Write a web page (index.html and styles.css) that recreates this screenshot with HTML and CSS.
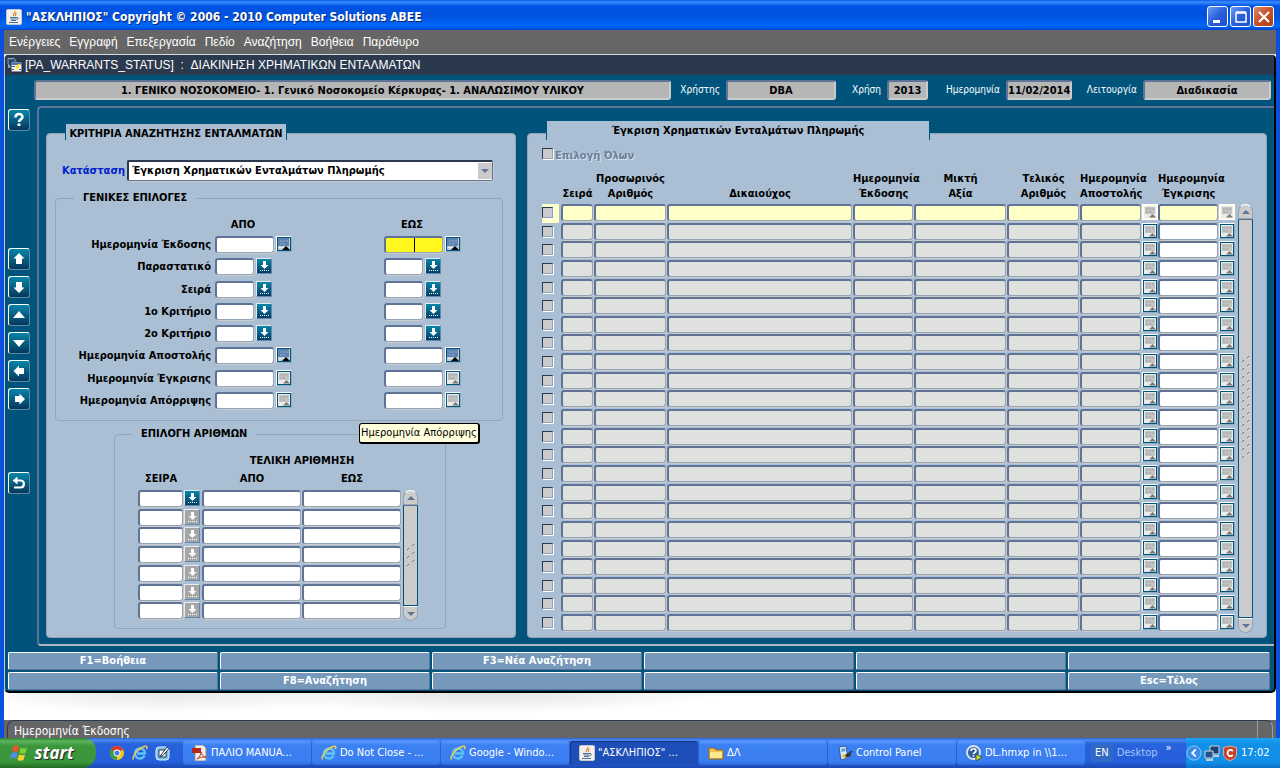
FILE: index.html
```html
<!DOCTYPE html>
<html lang="el">
<head>
<meta charset="utf-8">
<title>ΑΣΚΛΗΠΙΟΣ</title>
<link rel="stylesheet" href="styles.css">
</head>
<body>
<svg class="defs" aria-hidden="true">
  <defs>
    <pattern id="grip" width="10" height="8" patternUnits="userSpaceOnUse"><path d="M0 6h1v-1h1v-1h-1v1h-1zM5 2h1v-1h1v-1h-1v1h-1z" fill="#5e7396"/></pattern>
    <symbol id="java" viewBox="0 0 16 16">
      <rect x=".5" y=".5" width="15" height="15" rx="1.500" fill="#f2f1ec" stroke="#c8c8c8"/>
      <path d="M9 2c1 2-3 2.500-1.500 5M10.500 4C9 5 9 5.500 9.500 7" fill="none" stroke="#e0802c" stroke-width="1.200"/>
      <path d="M4 8.500h7M4.500 10h6M5 11.500h5M3 13.500h9M11 8.500c2 0 2 2-.5 2" fill="none" stroke="#4a6f9c"/>
    </symbol>
    <symbol id="cal-on" viewBox="0 0 12 12">
      <path d="M0 0h12v12H0z" fill="#c3cdd6"/><path d="M0 0h11v8H0z" fill="#5f83b0"/>
      <path d="M2 2h2v2H2zM5 2h2v2H5zM8 2h2v2H8zM2 5h2v2H2zM5 5h2v2H5z" fill="#7898c0"/>
      <path d="M1 9h5v1H1z" fill="#e8ecef"/>
      <path d="M4 12 8 8l4 4z" fill="#000"/>
    </symbol>
    <symbol id="cal-off" viewBox="0 0 12 12">
      <path d="M0 0h12v12H0z" fill="#ebebe8"/><path d="M1 1h10v7H1z" fill="#c3c3c3"/>
      <path d="M2 2h2v2H2zM5 2h2v2H5zM8 2h2v2H8zM2 5h2v2H2zM5 5h2v2H5z" fill="#b2b2b2"/>
      <path d="M5 11.500 8.500 8l3.500 3.500z" fill="#777"/>
    </symbol>
    <symbol id="lov" viewBox="0 0 14 14"><path d="M6 2h3v4h2.500L7.500 10 3.500 6H6z" fill="#fff"/><path d="M3 11.500h9" stroke="#fff" stroke-dasharray="1 1"/></symbol>
    <symbol id="ie" viewBox="0 0 16 16">
      <path d="M12.500 10.500c-1 2-2.500 3-4.500 3C5 13.500 3 11.500 3 8.500s2-5 5-5 5 2 5 5H5" fill="none" stroke="#5cc4fa" stroke-width="2.400"/>
      <path d="M1.500 14.500C-.5 12 6 3 13 1.200c2-.4 2.500 1 1.300 3" fill="none" stroke="#f8d24a" stroke-width="1.400"/>
    </symbol>
  </defs>
</svg>

<div class="window">
  <header class="titlebar">
    <svg class="app-icon"><use href="#java"/></svg>
    <h1>"ΑΣΚΛΗΠΙΟΣ" Copyright © 2006 - 2010 Computer Solutions ABEE</h1>
    <button class="win-btn" aria-label="Ελαχιστοποίηση"><svg viewBox="0 0 18 18"><path d="M4 12h7v3H4z" fill="#fff"/></svg></button>
    <button class="win-btn" aria-label="Μεγιστοποίηση"><svg viewBox="0 0 18 18"><path d="M4 5h10v9H4zM4 4h10" fill="none" stroke="#fff" stroke-width="1.500"/></svg></button>
    <button class="win-btn close" aria-label="Κλείσιμο"><svg viewBox="0 0 18 18"><path d="m4 4 10 10M14 4 4 14" stroke="#fff" stroke-width="2.200"/></svg></button>
  </header>
  <div class="client">
    <nav class="menubar">
      <button>Ενέργειες</button><button>Εγγραφή</button><button>Επεξεργασία</button><button>Πεδίο</button><button>Αναζήτηση</button><button>Βοήθεια</button><button>Παράθυρο</button>
    </nav>
    <main class="form">
      <div class="form-title">
        <svg viewBox="0 0 16 16"><path d="M1 1h5v3h4v3H4v4H1z" fill="#7fa3a0"/><path d="M1 1l3 1 3-1 2 3-4 1-1 5-3-3z" fill="#264b78" stroke="#b7d0d4" stroke-width=".6"/><path d="M4 5h11v10H4z" fill="#f4f4ee" stroke="#16213c"/><path d="M5 6h9v2H5z" fill="#4270c9"/><path d="m11 7-3 4h2l-2 3 5-4h-2l3-3z" fill="#f5dd24"/><path d="M5 9h3v1H5zM5 12h2v1H5zM12 12h2v1h-2z" fill="#3a57a6"/></svg>
        <h2>[PA_WARRANTS_STATUS] &nbsp;: &nbsp;ΔΙΑΚΙΝΗΣΗ ΧΡΗΜΑΤΙΚΩΝ ΕΝΤΑΛΜΑΤΩΝ</h2>
      </div>
      <div class="context">
        <input class="ctx org" aria-label="Οργανισμός" readonly value="1. ΓΕΝΙΚΟ ΝΟΣΟΚΟΜΕΙΟ- 1. Γενικό Νοσοκομείο Κέρκυρας- 1. ΑΝΑΛΩΣΙΜΟΥ ΥΛΙΚΟΥ">
        <label for="c-user" class="l-user">Χρήστης</label><input id="c-user" class="ctx user" readonly value="DBA">
        <label for="c-year" class="l-year">Χρήση</label><input id="c-year" class="ctx year" readonly value="2013">
        <label for="c-date" class="l-date">Ημερομηνία</label><input id="c-date" class="ctx date" readonly value="11/02/2014">
        <label for="c-mode" class="l-mode">Λειτουργία</label><input id="c-mode" class="ctx mode" readonly value="Διαδικασία">
      </div>
      <div class="body">
        <aside class="tools">
          <button aria-label="Βοήθεια"><svg viewBox="0 0 18 18"><path d="M5.500 6.500C5.500 2 12.500 2 12.500 6c0 2.500-3.500 2.300-3.500 5" fill="none" stroke="#fff" stroke-width="2.600"/><path d="M7.500 12.500h3V15h-3z" fill="#fff"/></svg></button>
          <div class="tool-group">
            <button aria-label="Πρώτη"><svg viewBox="0 0 18 18"><path d="m9 3 5.500 5.500H12V14H6V8.500H3.500z" fill="#fff"/></svg></button>
            <button aria-label="Τελευταία"><svg viewBox="0 0 18 18"><path d="m9 15 5.500-5.500H12V4H6v5.500H3.500z" fill="#fff"/></svg></button>
            <button aria-label="Επάνω"><svg viewBox="0 0 18 18"><path d="m9 5 6 7H3z" fill="#fff"/></svg></button>
            <button aria-label="Κάτω"><svg viewBox="0 0 18 18"><path d="m9 13 6-7H3z" fill="#fff"/></svg></button>
            <button aria-label="Προηγούμενο"><svg viewBox="0 0 18 18"><path d="m3.500 9 5.500-5.500V6h5v6H9v2.500z" fill="#fff"/></svg></button>
            <button aria-label="Επόμενο"><svg viewBox="0 0 18 18"><path d="M15 9 9.500 3.500V6H5v6h4.500v2.500z" fill="#fff"/></svg></button>
          </div>
          <button aria-label="Επιστροφή"><svg viewBox="0 0 18 18"><path d="M4 13.500h6.500c4.500 0 4.500-7 0-7H6" fill="none" stroke="#fff" stroke-width="2.200"/><path d="m2.500 6.500 5-4v8z" fill="#fff"/></svg></button>
        </aside>
        <div class="workspace">
          <section class="panel search">
            <h3 class="tab">ΚΡΙΤΗΡΙΑ ΑΝΑΖΗΤΗΣΗΣ ΕΝΤΑΛΜΑΤΩΝ</h3>
            <div class="status-row">
              <label for="status">Κατάσταση</label>
              <div class="select-box"><select id="status"><option>Έγκριση Χρηματικών Ενταλμάτων Πληρωμής</option></select><svg viewBox="0 0 14 16"><path d="M0 0h14v16H0z" fill="#cbcbcb"/><path d="M3 6h8l-4 4z" fill="#5e7396"/></svg></div>
            </div>
            <fieldset class="general">
              <legend>ΓΕΝΙΚΕΣ ΕΠΙΛΟΓΕΣ</legend>
              <div class="range-head"><span></span><span>ΑΠΟ</span><span>ΕΩΣ</span></div>
              <div class="ranges" id="ranges"></div>
            </fieldset>
            <fieldset class="numbers">
              <legend>ΕΠΙΛΟΓΗ ΑΡΙΘΜΩΝ</legend>
              <div class="grid-with-bar">
                <table class="num-table">
                  <colgroup><col class="n-series"><col class="n-btn"><col><col></colgroup>
                  <thead>
                    <tr><th></th><th></th><th colspan="2">ΤΕΛΙΚΗ ΑΡΙΘΜΗΣΗ</th></tr>
                    <tr><th>ΣΕΙΡΑ</th><th></th><th>ΑΠΟ</th><th>ΕΩΣ</th></tr>
                  </thead>
                  <tbody id="num-rows"></tbody>
                </table>
                <div class="scroll"><button aria-label="Κύλιση επάνω"><svg viewBox="0 0 12 12"><path d="m6 4 4 4H2z" fill="#5e7396"/></svg></button><div class="thumb"><svg class="grip short"><rect width="10" height="100%" fill="url(#grip)"/></svg></div><button aria-label="Κύλιση κάτω"><svg viewBox="0 0 12 12"><path d="m6 8 4-4H2z" fill="#5e7396"/></svg></button></div>
              </div>
            </fieldset>
            <div class="tooltip" role="tooltip">Ημερομηνία Απόρριψης</div>
          </section>
          <section class="panel results">
            <h3 class="tab">Έγκριση Χρηματικών Ενταλμάτων Πληρωμής</h3>
            <label class="select-all"><input type="checkbox" disabled>Επιλογή Όλων</label>
            <div class="grid-with-bar">
              <table class="res-table">
                <colgroup><col class="w19"><col class="w33"><col class="w73"><col><col class="w61"><col class="w93"><col class="w73"><col class="w62"><col class="w16"><col class="w61"><col class="w18"></colgroup>
                <thead><tr><th></th><th>Σειρά</th><th>Προσωρινός<br>Αριθμός</th><th>Δικαιούχος</th><th>Ημερομηνία<br>Έκδοσης</th><th>Μικτή<br>Αξία</th><th>Τελικός<br>Αριθμός</th><th>Ημερομηνία<br>Αποστολής</th><th></th><th>Ημερομηνία<br>Έγκρισης</th><th></th></tr></thead>
                <tbody id="res-rows"></tbody>
              </table>
              <div class="scroll"><button aria-label="Κύλιση επάνω"><svg viewBox="0 0 12 12"><path d="m6 4 4 4H2z" fill="#5e7396"/></svg></button><div class="thumb"><svg class="grip long"><rect width="10" height="100%" fill="url(#grip)"/></svg></div><button aria-label="Κύλιση κάτω"><svg viewBox="0 0 12 12"><path d="m6 8 4-4H2z" fill="#5e7396"/></svg></button></div>
            </div>
          </section>
        </div>
      </div>
      <div class="fkeys">
        <button>F1=Βοήθεια</button><button aria-label="F2"></button><button>F3=Νέα Αναζήτηση</button><button aria-label="F4"></button><button aria-label="F5"></button><button aria-label="F6"></button>
        <button aria-label="F7"></button><button>F8=Αναζήτηση</button><button aria-label="F9"></button><button aria-label="F10"></button><button aria-label="F11"></button><button>Esc=Τέλος</button>
      </div>
    </main>
    <div class="backdrop"></div>
    <div class="statusbar"><span>Ημερομηνία Έκδοσης</span><i></i></div>
  </div>
</div>

<footer class="taskbar">
  <button class="start"><svg viewBox="0 0 20 18"><path d="M3 3c2-2 4-2 6-.5L8 8C6 6.800 4 7 2 8z" fill="#e8562c"/><path d="M10.500 3.500c2 1.300 4 1 6.500 0l-1.500 5.500c-2 1-4 1-6 0z" fill="#7fcf3a"/><path d="M1.500 9.500c2-1.500 4-1.500 6-.3l-1.300 5.500c-2-1.300-4-1-6.200.3z" fill="#4f8df0"/><path d="M9 10.500c2 1 4 1 6 0L13.500 16c-2 1-4 1-6 0z" fill="#fad02c"/></svg>start</button>
  <div class="quick">
    <button aria-label="Chrome"><svg viewBox="0 0 16 16"><circle cx="8" cy="8" r="7" fill="#f3c622"/><path d="M8 8 1.900 4.500a7 7 0 0 1 12.200 0z" fill="#d9382a"/><path d="M8 8 1.900 4.500A7 7 0 0 0 8 15z" fill="#3b9c46"/><circle cx="8" cy="8" r="3.400" fill="#fff"/><circle cx="8" cy="8" r="2.500" fill="#3f83d8"/></svg></button>
    <button aria-label="Internet Explorer"><svg viewBox="0 0 16 16"><use href="#ie"/></svg></button>
    <button aria-label="Show Desktop"><svg viewBox="0 0 16 16"><rect x="1" y="2" width="13" height="13" rx="3" fill="#7fbdf0" stroke="#dff0ff"/><path d="M4 5h7v7H4z" fill="#fff" stroke="#245"/><path d="m6 10 6-8 2 1.500-6 7-3 1z" fill="#fff" stroke="#234"/></svg></button>
  </div>
  <div class="tasks">
    <button><svg viewBox="0 0 16 16"><path d="M3 0h8l3 3v13H3z" fill="#f3efe9" stroke="#a08b80"/><path d="M0 3h9v5H0z" fill="#b5261d"/><path d="M5 14c3-2 4-5 4-7 1 3 2 5 5 5-3 0-6 0-9 2z" fill="none" stroke="#c0392b"/></svg><span>ΠΑΛΙΟ MANUA...</span></button>
    <button><svg viewBox="0 0 16 16"><use href="#ie"/></svg><span>Do Not Close - ...</span></button>
    <button><svg viewBox="0 0 16 16"><use href="#ie"/></svg><span>Google - Windo...</span></button>
    <button class="active"><svg viewBox="0 0 16 16"><use href="#java"/></svg><span>"ΑΣΚΛΗΠΙΟΣ" ...</span></button>
    <button><svg viewBox="0 0 16 16"><path d="M1 3h5l2 2h7v9H1z" fill="#f0c24e" stroke="#9a6a14"/><path d="M2 7h12v6H2z" fill="#fde890"/></svg><span>ΔΛ</span></button>
    <button><svg viewBox="0 0 16 16"><path d="m2 2 7-1 2 12-7 2z" fill="#d7e8f8" stroke="#345a94"/><path d="m4 4 4-1 .5 3-4 1z" fill="#5f9fe0"/><path d="m8 11 5-3 2-2M8 12l6-2" stroke="#333" stroke-width="1.600" fill="none"/><path d="m5 10 3-1 1 3-3 1z" fill="#e7b93b"/></svg><span>Control Panel</span></button>
    <button><svg viewBox="0 0 16 16"><circle cx="7.500" cy="7.500" r="6.500" fill="#2f5ea8" stroke="#dbe3ea" stroke-width="2"/><path d="M5 6c0-3 5-3 5 0 0 1.500-2.500 1.500-2.500 3M7.500 10v1.500" stroke="#fff" stroke-width="1.600" fill="none"/><path d="m10 9 6 3.500-6 3.500z" fill="#c7e01c" stroke="#355"/></svg><span>DL.hmxp in \\1...</span></button>
  </div>
  <div class="lang"><b>EN</b><span>Desktop</span><i>»</i></div>
  <div class="tray">
    <button aria-label="Εμφάνιση κρυφών εικονιδίων"><svg viewBox="0 0 18 18"><circle cx="9" cy="9" r="8" fill="#3a8bea" stroke="#9fd0fa"/><path d="M11 5 7 9l4 4" fill="none" stroke="#fff" stroke-width="2"/></svg></button>
    <svg viewBox="0 0 16 16"><path d="M6 1h9v8H6z" fill="#1d3f74" stroke="#c9d2da"/><path d="M1 6h8v7H1z" fill="#24518c" stroke="#d7dde2"/><path d="M2 15h7M10 11h5" stroke="#c3cad0" stroke-width="2"/></svg>
    <svg viewBox="0 0 16 16"><path d="M1.500 2.500 8 1l6.500 1.500V9c0 4-4 6-6.500 6.500C5.500 15 1.500 13 1.500 9z" fill="#c4432a" stroke="#e6a898"/><path d="M10.800 6C8.500 3.800 5.500 5 5.500 8s3 4.200 5.300 2" fill="none" stroke="#fff" stroke-width="1.800"/></svg>
    <time>17:02</time>
  </div>
</footer>
<script src="app.js"></script>
</body>
</html>
```

FILE: styles.css
```css
:root {
  --ui: "DejaVu Sans Condensed", "Noto Sans", sans-serif;
  --teal: #00547b;
  --panel: #aabfd3;
  --edge: #5e7396;
  --soft: #93a3b8;
  --light: #cbcbcb;
}
* { box-sizing: border-box; }
body { margin: 0; min-height: 100vh; display: flex; flex-direction: column; font: 11px/14px var(--ui); color: #000; }
button, input, select { font: inherit; color: inherit; margin: 0; padding: 0; border: 0; }
button { background: none; display: flex; align-items: center; justify-content: center; }
h1, h2, h3 { margin: 0; }
svg { display: block; flex: none; }
.defs { position: absolute; width: 0; height: 0; }

.window { flex: 1; display: flex; flex-direction: column; background: #0a4fe0; }
.titlebar { height: 30px; padding: 3px 6px 0; display: flex; align-items: center; gap: 2px; background: linear-gradient(#0a5be8 0, #3a8dff 2px, #0054e3 6px, #0052dc 16px, #0068fc 26px, #0046cf 30px); }
.titlebar h1 { flex: 1; font: bold 12px/16px var(--ui); color: #fff; text-shadow: 1px 1px 0 #0a246a; }
.app-icon { width: 16px; height: 16px; margin-right: 2px; }
.win-btn { width: 21px; height: 21px; border: 1px solid #fff; border-radius: 3px; background: linear-gradient(135deg, #6d9bf5, #2a5fdc 50%, #1f50c8); }
.win-btn svg { width: 18px; height: 18px; }
.win-btn.close { background: linear-gradient(135deg, #e08a6a, #c5502a 50%, #b04018); }

.client { flex: 1; display: flex; flex-direction: column; margin: 0 4px; background: #fff; }
.menubar { height: 25px; padding-left: 5px; display: flex; gap: 9px; background: #666; border-bottom: 1px solid #dcdcdc; color: #fff; font: 12px/24px "Liberation Sans", Arial, sans-serif; }

.form { background: var(--teal); border-left: 1px solid #b9c6cc; border-right: 2px solid #000; border-bottom: 2px solid #000; border-radius: 4px 4px 5px 5px; overflow: hidden; }
.form-title { height: 20px; padding-left: 2px; display: flex; align-items: center; gap: 2px; background: #2b394f; color: #fff; }
.form-title svg { width: 16px; height: 16px; }
.form-title h2 { font: 12px/20px "Liberation Sans", Arial, sans-serif; }

.context { display: flex; align-items: center; padding: 5px 3px 0 29px; color: #fff; }
.context label { font-size: 10px; text-align: right; padding-right: 6px; flex: none; }
.ctx { height: 20px; border: 2px solid var(--edge); border-right-color: var(--light); border-bottom-color: var(--light); border-radius: 3px; background: #b6b6b6; color: #000; font-weight: bold; text-align: center; flex: none; min-width: 0; }
.ctx.org { flex: 1; }
.l-user { width: 55px; } .l-year { width: 51px; } .l-date { width: 78px; } .l-mode { width: 71px; }
.user { width: 110px; } .year { width: 41px; } .date { width: 66px; } .mode { width: 128px; }

.body { display: flex; padding-top: 6px; }
.tools { width: 32px; padding: 3px 0 0 3px; }
.tools button { width: 22px; height: 22px; border: 1px solid #fff; border-right-color: #5e88a4; border-bottom-color: #5e88a4; border-radius: 3px; background: linear-gradient(#0786a8, #05375c); }
.tools svg { width: 18px; height: 18px; }
.tool-group { margin: 117px 0 62px; display: flex; flex-direction: column; gap: 6px; }

.workspace { flex: 1; min-width: 0; display: flex; gap: 11px; padding: 25px 7px 6px 7px; border-top: 2px solid var(--edge); border-left: 2px solid var(--edge); border-bottom: 2px solid #aeb8c2; border-radius: 4px 0 0 4px; }
.panel { position: relative; background: var(--panel); border: 1px solid var(--soft); border-radius: 4px; }
.search { width: 470px; flex: none; padding: 0 12px 8px 8px; }
.results { flex: 1; min-width: 0; padding: 0 13px 4px 14px; }
.tab { background: var(--panel); border: solid var(--teal); border-width: 0 1px; font: bold 11px/20px var(--ui); text-align: center; }
.search .tab { width: 222px; height: 16px; margin: -10px 0 0 10px; }
.results .tab { width: 384px; height: 19px; margin: -13px 0 0 4px; }

.status-row { display: flex; align-items: center; margin: 20px 0 10px; padding-left: 7px; gap: 4px; font-weight: bold; }
.status-row label { color: #0020d0; width: 61px; white-space: nowrap; }
.select-box { position: relative; width: 366px; }
.select-box select { appearance: none; width: 100%; height: 21px; padding-left: 3px; background: #fff; border: 1px solid var(--edge); border-top: 2px solid #2b394f; border-left: 2px solid #2b394f; border-radius: 2px; font-weight: bold; box-shadow: 1px 1px 0 var(--light); }
.select-box svg { position: absolute; right: 1px; top: 3px; width: 14px; height: 16px; pointer-events: none; }

fieldset { margin: 0; padding: 0; border: 1px solid var(--soft); border-radius: 4px; min-width: 0; }
legend { padding: 0 9px; font: bold 11px/14px var(--ui); }
.general legend { margin-left: 18px; }
.general { height: 230px; }
.range-head, .range { display: grid; grid-template-columns: 159px 169px 1fr; }
.range-head { font-weight: bold; padding-top: 12px; line-height: 16px; }
.range-head span { width: 56px; text-align: center; }
.ranges { height: 181px; padding-top: 3px; display: grid; grid-auto-rows: 1fr; }
.range { align-items: start; }
.range label { font-weight: bold; text-align: right; padding-right: 4px; line-height: 17px; }
.pair { display: flex; gap: 2px; }

.field { display: block; height: 17px; width: 100%; background: #fff; border: 2px solid var(--edge); border-right: 1px solid var(--soft); border-bottom: 1px solid var(--soft); border-radius: 3px; box-shadow: 1px 1px 0 var(--light); }
.field.wide { width: 59px; }
.field.narrow { width: 39px; }
.field.focus { background: linear-gradient(#000, #000) center / 1px 14px no-repeat, #fff71e; }
.field.locked { background: #dee1de; }
.cal, .lov { width: 16px; height: 16px; flex: none; }
.cal { border: 1px solid #fff; border-right-color: #8fb0c4; border-bottom-color: #8fb0c4; background: var(--teal); }
.cal svg { width: 12px; height: 12px; }
.lov svg { width: 14px; height: 14px; }
.lov { border: 1px solid #e6eaee; border-right-color: #6488ac; border-bottom-color: #6488ac; background: linear-gradient(#0786a8, #023c66); }
.lov.off { background: #a6a6a6; }

.numbers { width: 332px; margin: 6px 0 0 59px; height: 202px; }
.numbers legend { margin-left: 17px; }
.grid-with-bar { display: flex; align-items: flex-end; gap: 1px; }
.numbers .grid-with-bar { padding: 13px 27px 0 23px; }
table { flex: 1; width: 100%; min-width: 0; table-layout: fixed; border-collapse: collapse; }
th, td { padding: 0; }
td { vertical-align: top; }
td:not(:first-child) .field { width: calc(100% - 1px); }
.num-table { height: 167px; }
.num-table th { height: 18px; vertical-align: top; }
.n-series { width: 46px; } .n-btn { width: 18px; }
.num-table .field { width: calc(100% - 1px); }

.select-all { display: flex; align-items: flex-start; gap: 2px; height: 16px; margin-top: 8px; font-weight: bold; line-height: 16px; color: #6d7f9b; text-shadow: 1px 1px 0 #dbe5ee; }
input[type=checkbox] { appearance: none; width: 11px; height: 11px; background: #cbcbcb; border: 1px solid #2b394f; border-right-color: #8fa1b5; border-bottom-color: #8fa1b5; box-shadow: 1px 1px 0 #fff; }
.results .grid-with-bar { margin-top: 7px; }
.res-table { height: 462px; }
.res-table th { height: 33px; padding-bottom: 3px; font: bold 11px/15px var(--ui); text-align: -webkit-center; vertical-align: bottom; white-space: nowrap; }
.res-table td input[type=checkbox] { display: block; margin-top: 3px; }
.res-table .current td:first-child { background: linear-gradient(#ffffc8, #ffffc8) 0 0 / 17px 100% no-repeat; }
.current .field { background: #ffffc8; }
.current .cal { border-color: #fff; background: #fffbe0; }
.w16 { width: 16px; } .w18 { width: 18px; } .w19 { width: 19px; } .w33 { width: 33px; } .w61 { width: 61px; } .w62 { width: 62px; } .w73 { width: 73px; } .w93 { width: 93px; }

.scroll { width: 15px; flex: none; display: flex; flex-direction: column; }
.numbers .scroll { height: 131px; }
.results .scroll { height: 429px; }
.scroll button { height: 15px; background: var(--light); border: 1px solid var(--soft); border-top-color: #fff; border-radius: 8px 8px 0 0; }
.scroll button:last-child { border-radius: 0 0 8px 8px; }
.scroll svg { width: 12px; height: 12px; }
.thumb { flex: 1; display: flex; align-items: center; justify-content: center; background: var(--light); border: 1px solid var(--teal); border-top-color: var(--edge); }
.scroll .grip { width: 8px; height: 104px; }
.scroll .grip.short { height: 24px; }
.results .thumb { padding-bottom: 22px; }

.fkeys { display: grid; grid-template-columns: repeat(5, minmax(0, 210fr)) minmax(0, 202fr); grid-auto-rows: 18px; gap: 2px; padding: 6px 4px 1px 3px; color: #fff; font-weight: bold; }
.fkeys button { border: 1px solid #fff; border-right-color: var(--edge); border-bottom-color: var(--edge); border-radius: 2px; background: #7598bb; }

.backdrop { flex: 1; background: radial-gradient(ellipse 200px 20px at 160px 0, #e6e6e6, transparent), radial-gradient(ellipse 240px 20px at 480px 0, #e2e2e2, transparent), #fff; }
.statusbar { height: 18px; display: flex; justify-content: space-between; background: #666; color: #fff; font: 12px/20px var(--ui); padding: 0 3px; }
.statusbar span { flex: 1; padding-left: 6px; border-top: 1px solid #2b394f; border-left: 1px solid #2b394f; border-radius: 7px 0 0 0; }
.statusbar i { width: 16px; border: 1px solid #8fa1b5; border-top-color: #2b394f; border-bottom: 0; border-radius: 0 7px 0 0; }

.taskbar { height: 30px; display: flex; background: linear-gradient(#2a62d4 0, #4a8af4 2px, #2862dc 6px, #245edb 24px, #1a48b0 30px); color: #fff; font: 11px/14px var(--ui); }
.start { width: 96px; flex: none; padding-right: 12px; gap: 4px; border-radius: 0 12px 14px 0; background: linear-gradient(#2f7d2f, #5cb55c 3px, #3c963c 8px, #389838 24px, #226922); font: italic bold 17px/20px "Open Sans", "Noto Sans", sans-serif; text-shadow: 1px 1px 1px #222; }
.start svg { width: 20px; height: 20px; }
.quick { display: flex; align-items: center; gap: 7px; padding: 0 12px 0 13px; }
.quick svg { width: 16px; height: 16px; }
.tasks { flex: 1; min-width: 0; display: grid; grid-template-columns: repeat(7, minmax(0, 1fr)); gap: 1px; padding: 3px 0; }
.tasks button { justify-content: flex-start; gap: 3px; padding: 0 8px 0 9px; border-radius: 3px; background: linear-gradient(#5c9cfc, #3c81f3 4px, #3a7df0 20px, #2f6cdc); }
.tasks .active { background: #1e4fb8; box-shadow: inset 1px 1px 1px #123684; }
.tasks svg { width: 16px; height: 16px; }
.tasks span { white-space: nowrap; }
.lang { width: 101px; display: flex; align-items: center; padding-left: 6px; }
.lang b { font-weight: normal; background: #316ac5; padding: 2px 4px; }
.lang span { color: #a6c5f5; margin: 0 8px 0 4px; }
.lang i { font-style: normal; align-self: flex-start; padding-top: 3px; }
.tray { width: 94px; display: flex; align-items: center; gap: 2px; background: linear-gradient(#1aa5f5, #1290e8 6px, #1190e9 24px, #0b6fc8); }
.tray svg { width: 16px; height: 16px; }
.tray time { margin-left: 1px; }

.tooltip { position: absolute; left: 312px; top: 289px; padding: 2px 1px; background: #ffffdc; border: 1px solid #000; border-right-width: 2px; border-bottom-width: 2px; border-radius: 3px; line-height: 14px; white-space: nowrap; }
```

FILE: app.js
```javascript
const icon = (id, size) => `<svg viewBox="0 0 ${size} ${size}"><use href="#${id}"/></svg>`;
const cal = (on) => `<button class="cal" aria-label="Ημερολόγιο">${icon(on ? "cal-on" : "cal-off", 12)}</button>`;
const lov = (on) => `<button class="lov${on ? "" : " off"}" aria-label="Λίστα τιμών">${icon("lov", 14)}</button>`;

const criteria = [
  ["Ημερομηνία Έκδοσης", "date", true],
  ["Παραστατικό", "list", true],
  ["Σειρά", "list", true],
  ["1ο Κριτήριο", "list", true],
  ["2ο Κριτήριο", "list", true],
  ["Ημερομηνία Αποστολής", "date", true],
  ["Ημερομηνία Έγκρισης", "date", false],
  ["Ημερομηνία Απόρριψης", "date", false],
];
document.getElementById("ranges").innerHTML = criteria.map(([name, kind, on], i) => {
  const size = kind === "date" ? "wide" : "narrow";
  const btn = kind === "date" ? cal(on) : lov(on);
  return `<div class="range"><label for="from${i}">${name}</label>
    <div class="pair"><input id="from${i}" class="field ${size}">${btn}</div>
    <div class="pair"><input aria-label="${name} έως" class="field ${size}${i === 0 ? " focus" : ""}">${btn}</div></div>`;
}).join("");

const field = (name, locked) => `<td><input class="field${locked ? " locked" : ""}" aria-label="${name}"></td>`;

document.getElementById("num-rows").innerHTML = Array.from({ length: 7 }, (_, i) =>
  `<tr>${field("Σειρά")}<td>${lov(i === 0)}</td>${field("Από")}${field("Έως")}</tr>`).join("");

const lockedColumns = ["Σειρά", "Προσωρινός Αριθμός", "Δικαιούχος", "Ημερομηνία Έκδοσης", "Μικτή Αξία", "Τελικός Αριθμός", "Ημερομηνία Αποστολής"];
document.getElementById("res-rows").innerHTML = Array.from({ length: 23 }, (_, i) =>
  `<tr${i === 0 ? ' class="current"' : ""}><td><input type="checkbox" aria-label="Επιλογή"></td>
  ${lockedColumns.map((c) => field(c, i > 0)).join("")}<td>${cal(false)}</td>${field("Ημερομηνία Έγκρισης")}<td>${cal(false)}</td></tr>`).join("");
```
